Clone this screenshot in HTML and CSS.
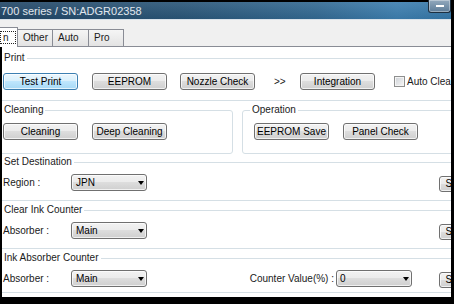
FILE: index.html
```html
<!DOCTYPE html>
<html>
<head>
<meta charset="utf-8">
<title>700 series</title>
<link rel="stylesheet" href="styles.css">
</head>
<body>
<div class="window">
  <div class="titlebar">
    <span class="title">700 series / SN:ADGR02358</span>
    <div class="min-btn"><span class="dash"></span></div>
  </div>
  <div class="client">
    <div class="tabstrip">
      <div class="tab tab-active"><span class="focus">n</span></div>
      <div class="tab">Other</div>
      <div class="tab tab-w36">Auto</div>
      <div class="tab">Pro</div>
    </div>
    <div class="panel">
      <div class="group g-print">
        <span class="legend">Print</span>
        <div class="row">
          <button class="btn btn-default">Test Print</button>
          <button class="btn ml14">EEPROM</button>
          <button class="btn ml13">Nozzle Check</button>
          <span class="chev">&gt;&gt;</span>
          <button class="btn">Integration</button>
          <span class="check"></span>
          <span class="check-label">Auto Clear</span>
        </div>
      </div>
      <div class="pair">
        <div class="group g-clean">
          <span class="legend">Cleaning</span>
          <div class="row">
            <button class="btn">Cleaning</button>
            <button class="btn ml14">Deep Cleaning</button>
          </div>
        </div>
        <div class="group g-op">
          <span class="legend">Operation</span>
          <div class="row">
            <button class="btn">EEPROM Save</button>
            <button class="btn ml14">Panel Check</button>
          </div>
        </div>
      </div>
      <div class="group g-dest">
        <span class="legend">Set Destination</span>
        <div class="row">
          <span class="lbl">Region :</span>
          <div class="combo"><span>JPN</span><span class="arrow"></span></div>
          <button class="btn btn-set ml-auto">Set</button>
        </div>
      </div>
      <div class="group g-clear">
        <span class="legend">Clear Ink Counter</span>
        <div class="row">
          <span class="lbl">Absorber :</span>
          <div class="combo"><span>Main</span><span class="arrow"></span></div>
          <button class="btn btn-set ml-auto">Set</button>
        </div>
      </div>
      <div class="group g-absorb">
        <span class="legend">Ink Absorber Counter</span>
        <div class="row">
          <span class="lbl">Absorber :</span>
          <div class="combo"><span>Main</span><span class="arrow"></span></div>
          <div class="counter">
            <span>Counter Value(%) :</span>
            <div class="combo combo-val"><span>0</span><span class="arrow"></span></div>
          </div>
          <button class="btn btn-set ml27">Set</button>
        </div>
      </div>
    </div>
  </div>
</div>
</body>
</html>
```
FILE: styles.css
```css
* { box-sizing: border-box; }
html, body { margin: 0; padding: 0; }
body {
  background: #000;
  width: 454px;
  height: 304px;
  overflow: hidden;
  font-family: "Liberation Sans", Arial, sans-serif;
  font-size: 10px;
  color: #1a1a1a;
}
.window {
  width: 451px;
  height: 297px;
  display: flex;
  flex-direction: column;
  overflow: hidden;
  background: #f0f0f0;
}
.titlebar {
  height: 19px;
  flex: none;
  display: flex;
  align-items: center;
  background:
    linear-gradient(#000, #000) top / 100% 2px no-repeat,
    linear-gradient(180deg, rgba(255,255,255,0.10), rgba(0,0,0,0.06)),
    linear-gradient(90deg, #234767 0%, #2a5678 40%, #336a93 70%, #3d7fb0 88%, #3577a8 100%);
}
.title {
  font-size: 11px;
  color: #e1e7ee;
  margin-left: 1px;
  padding-top: 2px;
  white-space: nowrap;
}
.min-btn {
  margin-left: auto;
  align-self: flex-start;
  width: 23px;
  height: 13px;
  border: 1px solid #1d2f40;
  border-top: none;
  border-radius: 0 0 3px 3px;
  background: linear-gradient(#93a9bd, #5d7c98);
  box-shadow: inset 0 0 0 1px rgba(255,255,255,0.35);
  display: flex;
  align-items: center;
  justify-content: center;
}
.dash { width: 8px; height: 2px; background: #fff; }
.client {
  flex: 1;
  min-height: 0;
  display: flex;
  flex-direction: column;
  border-top: 1px solid #d9e2ea;
}
.tabstrip {
  height: 26px;
  flex: none;
  display: flex;
  align-items: flex-end;
}
.tab {
  height: 17px;
  width: 35px;
  flex: none;
  border-top: 1px solid #898c95;
  border-right: 1px solid #898c95;
  background: linear-gradient(#f5f5f5, #e3e3e3);
  padding: 2px 0 0 5px;
  line-height: 12px;
  white-space: nowrap;
}
.tab-w36 { width: 36px; }
.tab-active {
  position: relative;
  z-index: 1;
  width: 22px;
  height: 20px;
  margin-left: -4px;
  margin-bottom: -1px;
  border-left: 1px solid #898c95;
  background: #fff;
  padding: 3px 0 0 3px;
}
.focus {
  display: block;
  width: 16px;
  height: 13px;
  border: 1px dotted #222;
  padding-left: 2px;
  line-height: 11px;
}
.panel {
  flex: 1;
  background: #fff;
  border-top: 1px solid #898c95;
  border-left: 2px solid #000;
  overflow: hidden;
}
.group {
  position: relative;
  margin: 0 -25px 0 -8px;
  border: 1px solid #d5dfe5;
  border-radius: 3px;
  padding: 11px 8px 9px;
}
.legend {
  position: absolute;
  top: -7px;
  left: 7px;
  padding: 0 2px;
  background: #fff;
  line-height: 12px;
  white-space: nowrap;
}
.g-print { margin-top: 11px; padding-top: 14px; padding-bottom: 10px; }
.pair { display: flex; margin: 9px -25px 0 -8px; }
.pair .group { margin: 0; padding-top: 12px; padding-bottom: 13px; }
.g-clean { width: 239px; flex: none; }
.pair .g-op { flex: 1; margin-left: 9px; padding-left: 11px; }
.g-dest { margin-top: 8px; }
.g-clear { margin-top: 9px; }
.g-absorb { margin-top: 9px; padding-bottom: 5px; }
.row {
  display: flex;
  align-items: center;
  height: 17px;
  white-space: nowrap;
}
.btn {
  flex: none;
  width: 75px;
  height: 17px;
  margin: 0;
  padding: 0;
  font: inherit;
  color: #000;
  border: 1px solid #707070;
  border-radius: 3px;
  background: linear-gradient(#f2f2f2 0%, #ebebeb 49%, #dddddd 50%, #cfcfcf 100%);
  box-shadow: inset 0 0 0 1px rgba(255,255,255,0.7);
  line-height: 15px;
  text-align: center;
  white-space: nowrap;
}
.btn-default {
  border-color: #3c7fb1;
  background: linear-gradient(#eaf6fd 0%, #d9f0fc 49%, #bee6fd 50%, #a7d9f5 100%);
}
.ml14 { margin-left: 14px; }
.ml13 { margin-left: 13px; }
.ml27 { margin-left: 27px; }
.ml-auto { margin-left: auto; }
.chev { flex: none; width: 26px; margin-left: 19px; }
.check {
  flex: none;
  width: 11px;
  height: 11px;
  margin-left: 19px;
  border: 1px solid #8e8f8f;
  background: linear-gradient(135deg, #cdd1d6, #f7f7f7);
  box-shadow: inset 0 0 0 1px #f4f4f4;
}
.check-label { margin-left: 2px; }
.lbl { flex: none; width: 68px; }
.combo {
  flex: none;
  width: 76px;
  height: 17px;
  border: 1px solid #707070;
  border-radius: 3px;
  background: linear-gradient(#f2f2f2 0%, #ebebeb 49%, #dddddd 50%, #cfcfcf 100%);
  box-shadow: inset 0 0 0 1px rgba(255,255,255,0.7);
  display: flex;
  align-items: center;
  padding: 0 2px 0 4px;
  color: #000;
}
.combo-val { padding-left: 3px; }
.arrow {
  margin-left: auto;
  width: 0;
  height: 0;
  border-left: 3px solid transparent;
  border-right: 3px solid transparent;
  border-top: 4px solid #000;
}
.counter {
  margin-left: auto;
  display: flex;
  align-items: center;
  gap: 2px;
}
.btn-set {
  width: 28px;
  height: 16px;
  line-height: 14px;
  align-self: flex-start;
  margin-top: 2px;
}
```
